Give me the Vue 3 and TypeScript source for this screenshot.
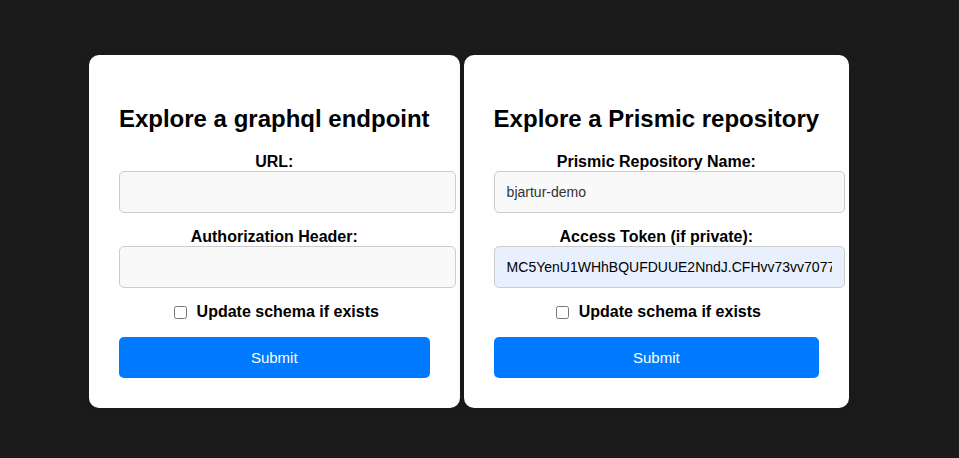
<script setup lang="ts">
import { ref } from 'vue'

interface Field {
  id: string
  label: string
  value: string
  autofilled?: boolean
}

interface SourceForm {
  id: string
  title: string
  fields: Field[]
  update: boolean
}

const forms = ref<SourceForm[]>([
  {
    id: 'graphql',
    title: 'Explore a graphql endpoint',
    fields: [
      { id: 'url', label: 'URL:', value: '' },
      { id: 'auth-header', label: 'Authorization Header:', value: '' },
    ],
    update: false,
  },
  {
    id: 'prismic',
    title: 'Explore a Prismic repository',
    fields: [
      { id: 'repository', label: 'Prismic Repository Name:', value: 'bjartur-demo' },
      {
        id: 'token',
        label: 'Access Token (if private):',
        value: 'MC5YenU1WHhBQUFDUUE2NndJ.CFHvv73vv7077',
        autofilled: true,
      },
    ],
    update: false,
  },
])
</script>

<template>
  <main class="page">
    <form v-for="form in forms" :key="form.id" class="card" @submit.prevent>
      <h2 class="title">{{ form.title }}</h2>
      <div v-for="field in form.fields" :key="field.id" class="field">
        <label class="label" :for="field.id">{{ field.label }}</label>
        <input
          :id="field.id"
          v-model="field.value"
          class="input"
          :class="{ autofilled: field.autofilled }"
          type="text"
          autocomplete="off"
          spellcheck="false"
        />
      </div>
      <div class="check">
        <input :id="`${form.id}-update`" v-model="form.update" class="box" type="checkbox" />
        <label class="label" :for="`${form.id}-update`">Update schema if exists</label>
      </div>
      <button class="submit" type="submit">Submit</button>
    </form>
  </main>
</template>

<style>
body {
  background: #1b1b1b;
}
</style>

<style scoped>
.page {
  display: flex;
  flex-wrap: wrap;
  justify-content: center;
  align-items: flex-start;
  gap: 4px;
  padding: 55px 21px 50px 0;
  font-family: Arial, "Liberation Sans", sans-serif;
  color: #000;
}

.card {
  padding: 30px;
  background: #fff;
  border-radius: 10px;
  box-shadow: 0 0 10px rgba(0, 0, 0, 0.1);
  text-align: center;
}

.title {
  margin: 20px 0;
  font-size: 24px;
  line-height: 28px;
}

.field {
  margin-bottom: 15px;
}

.label {
  display: block;
  font-size: 16px;
  font-weight: bold;
  line-height: 18px;
}

.input {
  display: block;
  box-sizing: content-box;
  width: 100%;
  height: 16px;
  padding: 12px;
  border: 1px solid #ccc;
  border-radius: 5px;
  background: #f9f9f9;
  color: #333;
  font-family: inherit;
  font-size: 14px;
}

.autofilled {
  background: #e8f0fe;
  color: #000;
}

.check {
  display: flex;
  justify-content: center;
  align-items: flex-start;
  gap: 10px;
  margin-bottom: 16px;
}

.box {
  width: 13px;
  height: 13px;
  margin: 3px 0 0 4px;
}

.submit {
  display: block;
  width: 100%;
  padding: 12px;
  border: none;
  border-radius: 5px;
  background: #007bff;
  color: #fff;
  font-family: inherit;
  font-size: 15px;
  line-height: 17px;
  cursor: pointer;
}
</style>
